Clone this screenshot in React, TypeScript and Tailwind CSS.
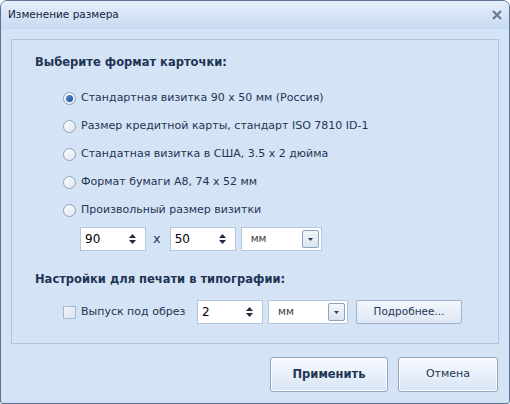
import React from "react";

const font = { fontFamily: '"DejaVu Sans", "Noto Sans", sans-serif' };

function Radio({ checked }: { checked?: boolean }) {
  return (
    <span className="flex h-[13px] w-[13px] shrink-0 items-center justify-center rounded-full border border-[#8aa2c0] bg-gradient-to-br from-[#ffffff] to-[#dfe6ee]">
      {checked && <span className="h-[7px] w-[7px] rounded-full bg-gradient-to-br from-[#5b8fd6] to-[#1c4f9c]" />}
    </span>
  );
}

function SpinArrows() {
  return (
    <svg width="7" height="12" viewBox="0 0 7 12" className="shrink-0">
      <path d="M3.5 1 L7 5 L0 5 Z" fill="#1b2b3f" />
      <path d="M0 7 L7 7 L3.5 11 Z" fill="#1b2b3f" />
    </svg>
  );
}

function Spin({ value, w }: { value: string; w: string }) {
  return (
    <div className={`flex h-[24px] ${w} shrink-0 items-center justify-between border border-[#b4c6dd] bg-white pl-[4px] pr-[9px] text-[12px] text-black`}>
      <span>{value}</span>
      <SpinArrows />
    </div>
  );
}

function Combo({ value, w }: { value: string; w: string }) {
  return (
    <div className={`flex h-[24px] ${w} shrink-0 items-center justify-between border border-[#b4c6dd] bg-white pl-[9px] pr-[2px] text-[10.5px] text-[#3b3b3b]`}>
      <span>{value}</span>
      <span className="flex h-[18px] w-[17px] items-center justify-center rounded-[2px] border border-[#8ea3be] bg-gradient-to-b from-[#f4f7fb] to-[#d9e3ef]">
        <svg width="5" height="3" viewBox="0 0 5 3">
          <path d="M0 0 L5 0 L2.5 3 Z" fill="#2c3e55" />
        </svg>
      </span>
    </div>
  );
}

export default function App() {
  const options = [
    "Стандартная визитка 90 x 50 мм (Россия)",
    "Размер кредитной карты, стандарт ISO 7810 ID-1",
    "Стандатная визитка в США, 3.5 x 2 дюйма",
    "Формат бумаги A8, 74 x 52 мм",
    "Произвольный размер визитки",
  ];
  return (
    <div style={font} className="flex h-[404px] w-[510px] flex-col overflow-hidden rounded-t-[7px] rounded-b-[3px] border border-[#5b7392] bg-[#d5e3f7]">
      {/* title bar */}
      <div className="flex h-[28px] shrink-0 items-center justify-between bg-gradient-to-b from-[#e6eefa] via-[#d7e5f7] to-[#c7daf2] pl-[7px] pr-[6px]">
        <span className="text-[10.5px] text-[#15233a]">Изменение размера</span>
        <svg width="12" height="12" viewBox="0 0 12 12">
          <path d="M2 2 L10 10 M10 2 L2 10" stroke="#6b7a8e" strokeWidth="2.2" />
        </svg>
      </div>
      {/* group panel */}
      <div className="ml-[10px] mr-[10px] mt-[10px] flex h-[305px] flex-col border border-[#b3c5dc] bg-[#d5e3f7] pl-[23px] pt-[14px]">
        <div className="text-[11.5px] font-bold leading-[16px] text-[#1e3553]">Выберите формат карточки:</div>
        <div className="mt-[18px] flex flex-col gap-[8px] pl-[28px]">
          {options.map((o, i) => (
            <div key={i} className="flex h-[20px] items-center gap-[5px] text-[11px] text-[#1e3553]">
              <Radio checked={i === 0} />
              <span>{o}</span>
            </div>
          ))}
        </div>
        <div className="mt-[7px] flex items-center pl-[45px]">
          <Spin value="90" w="w-[66px]" />
          <span className="ml-[7px] mr-[9px] text-[13px] text-[#1e3553]">x</span>
          <Spin value="50" w="w-[66px]" />
          <div className="ml-[5px]">
            <Combo value="мм" w="w-[81px]" />
          </div>
        </div>
        <div className="mt-[20px] text-[11.5px] font-bold leading-[16px] text-[#1e3553]">Настройки для печати в типографии:</div>
        <div className="mt-[13px] flex items-center pl-[28px]">
          <span className="h-[13px] w-[13px] shrink-0 border border-[#a8b8cc] bg-gradient-to-br from-[#f2f5f9] to-[#dbe3ec]" />
          <span className="ml-[5px] w-[116px] shrink-0 text-[11px] text-[#1e3553]">Выпуск под обрез</span>
          <Spin value="2" w="w-[66px]" />
          <div className="ml-[5px]">
            <Combo value="мм" w="w-[80px]" />
          </div>
          <div className="ml-[8px] flex h-[24px] w-[106px] items-center justify-center rounded-[2px] border border-[#9fb3cc] bg-gradient-to-b from-[#f3f7fc] to-[#dde7f4] text-[10.5px] text-[#1e3553]">
            Подробнее...
          </div>
        </div>
      </div>
      {/* buttons */}
      <div className="mr-[11px] mt-[13px] flex justify-end gap-[10px]">
        <div className="flex h-[35px] w-[118px] items-center justify-center rounded-[3px] border border-[#8fa5c2] bg-gradient-to-b from-[#f7faff] via-[#e8f0fa] to-[#d8e4f4] text-[11.5px] font-bold text-[#1e3553] shadow-[inset_0_0_0_1px_#ffffff]">
          Применить
        </div>
        <div className="flex h-[35px] w-[100px] items-center justify-center rounded-[3px] border border-[#8fa5c2] bg-gradient-to-b from-[#f7faff] via-[#e8f0fa] to-[#d8e4f4] text-[11px] text-[#1e3553] shadow-[inset_0_0_0_1px_#ffffff]">
          Отмена
        </div>
      </div>
    </div>
  );
}
